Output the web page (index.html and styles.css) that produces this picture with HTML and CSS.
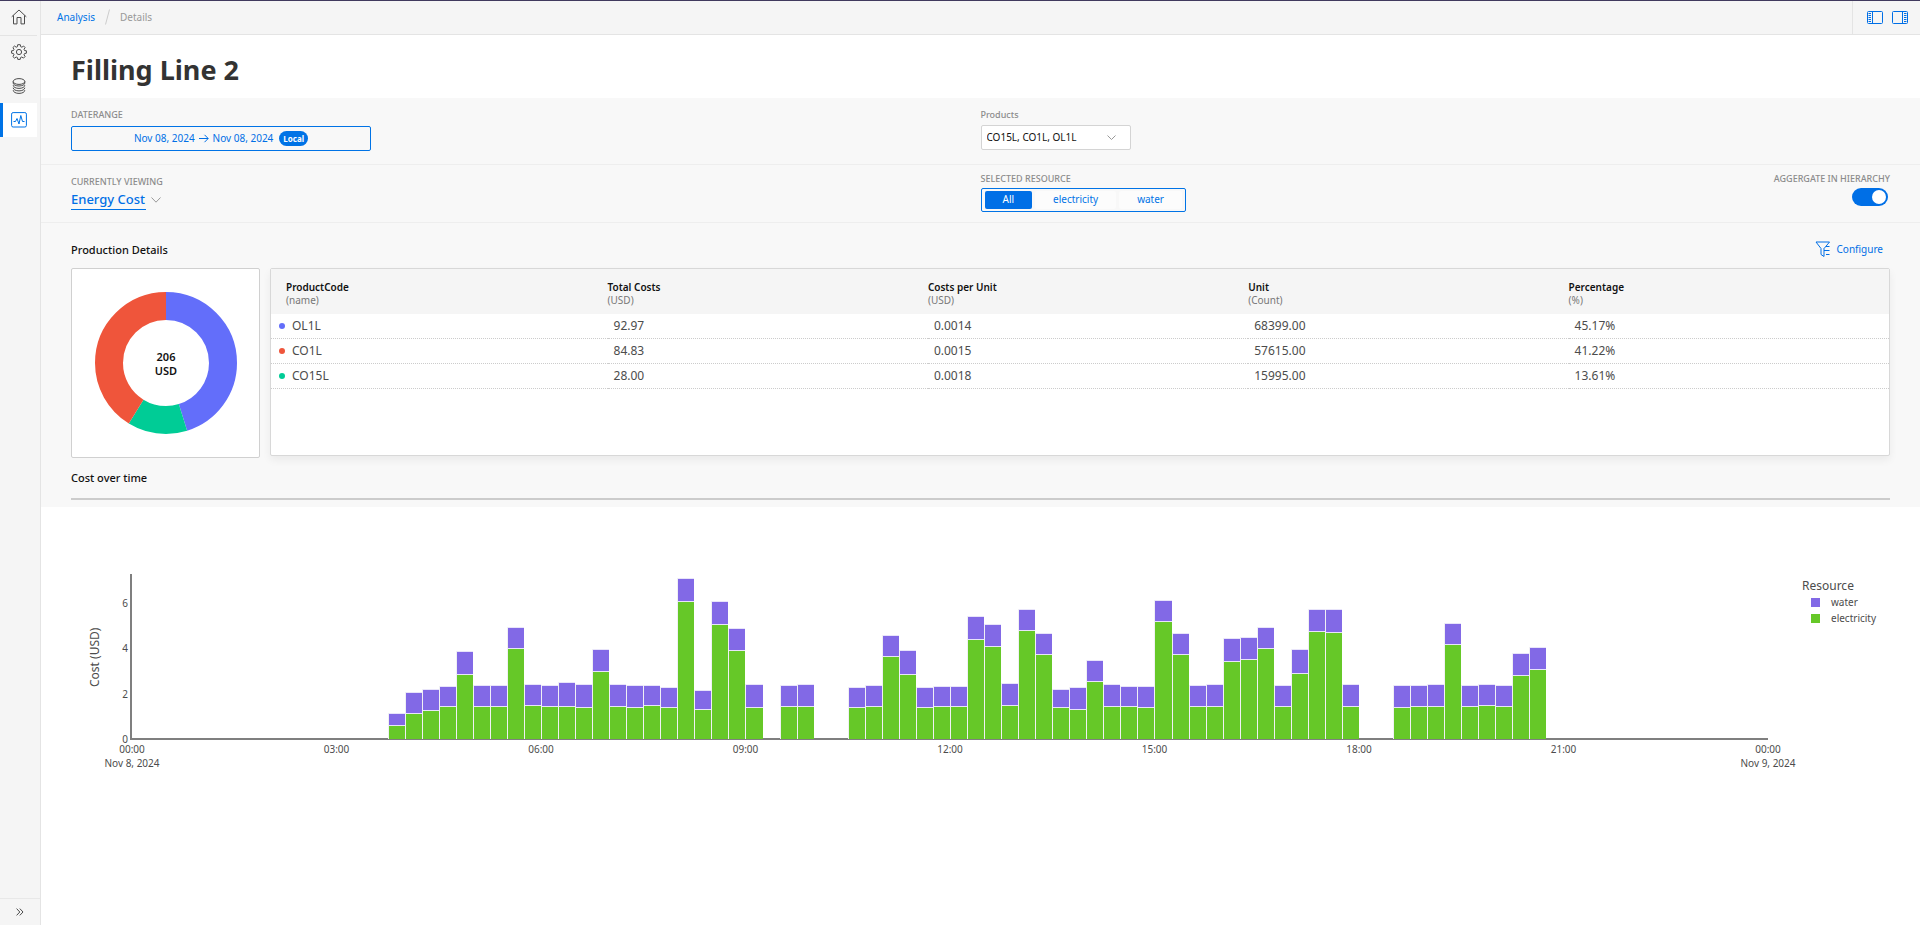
FILE: index.html
```html
<!DOCTYPE html>
<html lang="en">
<head>
    <meta charset="UTF-8">
    <meta name="viewport" content="width=device-width, initial-scale=1.0">
    <title>Filling Line 2 - Details</title>
    <link rel="stylesheet" href="styles.css">
</head>
<body>

    <!-- Sidebar -->
    <nav class="sidebar" aria-label="Main">
        <a class="nav-item nav-home" href="#" aria-label="Home">
            <svg width="16" height="16" viewBox="0 0 16 16"><path d="M.7 7.800 8 1l7.300 6.800M2.500 6.400v8.500H6V8.500h4v6.400h3.500V6.400"/></svg>
        </a>
        <a class="nav-item" href="#" aria-label="Settings">
            <svg width="16" height="16" viewBox="0 0 16 16"><circle cx="8" cy="8" r="2.600"/><path d="M6.700.7h2.600l.4 2 1.200.5L12.600 2l1.500 1.600-1.100 1.700.5 1.200 1.900.3v2.400l-1.900.4-.5 1.200 1.100 1.700-1.600 1.600-1.700-1.100-1.200.5-.4 1.900H6.800l-.4-1.900-1.200-.5-1.700 1.100-1.600-1.600L3 10.800l-.5-1.200L.6 9.200V6.800l1.900-.3L3 5.300 1.900 3.600 3.500 2l1.700 1.200 1.200-.5z"/></svg>
        </a>
        <a class="nav-item" href="#" aria-label="Data">
            <svg width="16" height="16" viewBox="0 0 16 16"><ellipse cx="8" cy="3.500" rx="5.800" ry="2.900"/><path d="M2.200 3.500v1.600c0 1.600 2.600 2.900 5.800 2.900s5.800-1.300 5.800-2.900V3.500M2.200 7.200c0 1.900 2.600 3.200 5.800 3.200s5.800-1.300 5.800-3.200M2.200 9.700c0 1.900 2.600 3.200 5.800 3.200s5.800-1.300 5.800-3.200M2.200 12.200c0 1.900 2.600 3.200 5.800 3.200s5.800-1.300 5.800-3.200"/></svg>
        </a>
        <a class="nav-item nav-active" href="#" aria-label="Analysis" aria-current="page">
            <svg width="16" height="16" viewBox="0 0 16 16"><rect x=".6" y=".6" width="14.800" height="14.400" rx="1.500"/><path d="M2.500 9.500h2l1.500-3 2 5.500 1.800-8.500 1.700 6h2"/></svg>
        </a>
        <button class="nav-expand" type="button" aria-label="Expand menu">
            <svg width="8" height="8" viewBox="0 0 8 8"><path d="m.6.600 3.200 3.400L.6 7.400M3.800.6 7 4 3.800 7.400"/></svg>
        </button>
    </nav>

    <div class="main">
        <!-- Breadcrumb bar -->
        <header class="topbar">
            <nav class="breadcrumb" aria-label="Breadcrumb">
                <a href="#">Analysis</a>
                <svg width="5" height="16" viewBox="0 0 5 16"><path d="M4.500.5.500 15.500"/></svg>
                <span>Details</span>
            </nav>
            <div class="panel-buttons">
                <button type="button" aria-label="Toggle left panel">
                    <svg width="16" height="13" viewBox="0 0 16 13"><rect x=".5" y=".5" width="15" height="12" rx="1"/><path d="M5.500.5v12M1.500 2.500H4M1.500 4.500H4M1.500 6.500H4M1.500 8.500H4M1.500 10.500H4"/></svg>
                </button>
                <button type="button" aria-label="Toggle right panel">
                    <svg width="16" height="13" viewBox="0 0 16 13"><rect x=".5" y=".5" width="15" height="12" rx="1"/><path d="M10.500.5v12M12 2.500h2.500M12 4.500h2.500M12 6.500h2.500M12 8.500h2.500M12 10.500h2.500"/></svg>
                </button>
            </div>
        </header>

        <h1 class="title">Filling Line 2</h1>

        <div class="panel">
            <!-- Filters -->
            <div class="filters filters-top">
                <div class="field">
                    <span class="label" id="range-label">DATERANGE</span>
                    <button class="daterange" type="button" aria-describedby="range-label">
                        <span>Nov 08, 2024</span>
                        <svg width="10" height="9" viewBox="0 0 10 9"><path d="M0 4.500h9M5.500.800l3.700 3.700-3.700 3.700"/></svg>
                        <span>Nov 08, 2024</span>
                        <span class="badge">Local</span>
                    </button>
                </div>
                <div class="field">
                    <label class="label" for="products">Products</label>
                    <div class="select-box">
                        <select id="products">
                            <option>CO15L, CO1L, OL1L</option>
                        </select>
                        <svg width="9" height="5" viewBox="0 0 9 5"><path d="M.5.500 4.500 4.500l4-4"/></svg>
                    </div>
                </div>
            </div>

            <div class="filters filters-bottom">
                <div class="field field-view">
                    <label class="label" for="view">CURRENTLY VIEWING</label>
                    <div class="view-box">
                        <select id="view">
                            <option>Energy Cost</option>
                        </select>
                        <svg width="10" height="6" viewBox="0 0 10 6"><path d="M.5.500 5 5.200 9.500.500"/></svg>
                    </div>
                </div>
                <div class="field-pair">
                    <fieldset class="field">
                        <legend class="label">SELECTED RESOURCE</legend>
                        <div class="segments">
                            <label><input type="radio" name="resource" checked><span>All</span></label>
                            <label><input type="radio" name="resource"><span>electricity</span></label>
                            <label><input type="radio" name="resource"><span>water</span></label>
                        </div>
                    </fieldset>
                    <div class="field field-right">
                        <label class="label" for="aggregate">AGGERGATE IN HIERARCHY</label>
                        <input class="switch" id="aggregate" type="checkbox" role="switch" checked>
                    </div>
                </div>
            </div>

            <!-- Production details -->
            <section class="details">
                <div class="section-head">
                    <h2>Production Details</h2>
                    <button class="configure" type="button">
                        <svg width="16" height="16" viewBox="0 0 16 16"><path d="M1 1h13.500L9.500 7M1 1l5 6.500v6l3 2V7M11 5.500h3.500M9 9.500h5.500M11 13.500h3.500"/></svg>
                        Configure
                    </button>
                </div>
                <div class="cards">
                    <div class="donut-card">
                        <svg class="donut" width="142" height="142" viewBox="0 0 142 142" role="img" aria-label="Cost share by product">
                            <g transform="rotate(-90 71 71)">
                                <circle cx="71" cy="71" r="57" pathLength="100" stroke="#636efa" stroke-dasharray="45.17 100"/>
                                <circle cx="71" cy="71" r="57" pathLength="100" stroke="#00cc96" stroke-dasharray="13.61 100" stroke-dashoffset="-45.17"/>
                                <circle cx="71" cy="71" r="57" pathLength="100" stroke="#ef553b" stroke-dasharray="41.22 100" stroke-dashoffset="-58.78"/>
                            </g>
                            <text x="71" y="69">206</text>
                            <text x="71" y="83">USD</text>
                        </svg>
                    </div>
                    <div class="table-card">
                        <table>
                            <thead>
                                <tr>
                                    <th>ProductCode<small>(name)</small></th>
                                    <th>Total Costs<small>(USD)</small></th>
                                    <th>Costs per Unit<small>(USD)</small></th>
                                    <th>Unit<small>(Count)</small></th>
                                    <th>Percentage<small>(%)</small></th>
                                </tr>
                            </thead>
                            <tbody>
                                <tr><td><span class="dot dot-blue"></span>OL1L</td><td>92.97</td><td>0.0014</td><td>68399.00</td><td>45.17%</td></tr>
                                <tr><td><span class="dot dot-red"></span>CO1L</td><td>84.83</td><td>0.0015</td><td>57615.00</td><td>41.22%</td></tr>
                                <tr><td><span class="dot dot-green"></span>CO15L</td><td>28.00</td><td>0.0018</td><td>15995.00</td><td>13.61%</td></tr>
                            </tbody>
                        </table>
                    </div>
                </div>
                <h2 class="chart-title">Cost over time</h2>
            </section>
        </div>

        <!-- Stacked bar chart -->
        <section class="chart">
            <div class="y-title">Cost (USD)</div>
            <div class="y-axis"><span>6</span><span>4</span><span>2</span><span>0</span></div>
            <div class="plot-col">
                <div class="plot" id="plot"></div>
                <div class="x-axis">
                    <span>00:00<br>Nov 8, 2024</span>
                    <span>03:00</span>
                    <span>06:00</span>
                    <span>09:00</span>
                    <span>12:00</span>
                    <span>15:00</span>
                    <span>18:00</span>
                    <span>21:00</span>
                    <span>00:00<br>Nov 9, 2024</span>
                </div>
            </div>
            <div class="legend">
                <div class="legend-title">Resource</div>
                <div class="legend-item"><span class="swatch water"></span>water</div>
                <div class="legend-item"><span class="swatch electricity"></span>electricity</div>
            </div>
        </section>
    </div>

    <script src="chart.js"></script>
</body>
</html>
```
FILE: styles.css
```css
* {
    box-sizing: border-box;
}

body {
    margin: 0;
    min-height: 100vh;
    display: flex;
    border-top: 1px solid #413a5e;
    background-color: white;
    color: #4c4c4c;
    font-family: "Noto Sans", sans-serif;
    font-size: 10px;
    line-height: 14px;
}

svg {
    display: block;
    fill: none;
    stroke: currentColor;
}

a {
    color: #0073e6;
    text-decoration: none;
}

button,
select {
    margin: 0;
    padding: 0;
    border: none;
    background: none;
    color: #006fe6;
    font: inherit;
    cursor: pointer;
    appearance: none;
}

h1,
h2 {
    margin: 0;
}

/* Sidebar */
.sidebar {
    display: flex;
    flex-direction: column;
    width: 41px;
    border-right: 1px solid #e4e4e4;
    background-color: #f5f5f5;
}

.nav-item {
    display: flex;
    align-items: center;
    height: 34px;
    margin-right: 3px;
    padding-left: 11px;
    color: #4c4c4c;
}

.nav-home {
    height: 35px;
    padding-bottom: 2px;
    border-bottom: 1px solid #e4e4e4;
}

.nav-home + .nav-item {
    height: 33px;
    padding-bottom: 1px;
}

.nav-active {
    padding-left: 8px;
    border-left: 3px solid #0073e6;
    background-color: white;
    color: #0073e6;
}

.nav-expand {
    display: flex;
    align-items: center;
    height: 27px;
    margin-top: auto;
    padding-left: 16px;
    border-top: 1px solid #e8e8e8;
    color: #4c4c4c;
}

/* Top bar */
.main {
    flex: 1;
    min-width: 0;
}

.topbar {
    display: flex;
    justify-content: space-between;
    height: 34px;
    border-bottom: 1px solid #e4e4e4;
    background-color: #f5f5f5;
}

.breadcrumb {
    display: flex;
    align-items: center;
    gap: 10px;
    padding: 0 0 2px 16px;
    color: #999;
}

.breadcrumb svg {
    color: #ccc;
}

.panel-buttons {
    display: flex;
    align-items: center;
    gap: 9px;
    padding: 0 12px 1px 14px;
    border-left: 1px solid #e4e4e4;
}

.title {
    padding: 17px 30px 10px;
    color: #333;
    font-size: 27px;
    line-height: 36px;
}

/* Filters */
.panel {
    background-color: #f8f8f8;
}

.filters {
    display: grid;
    grid-template-columns: 1fr 1fr;
    padding: 0 30px;
    border-bottom: 1px solid #eee;
}

.filters-top {
    padding-top: 9px;
    padding-bottom: 13px;
}

.filters-bottom {
    padding-top: 6px;
    padding-bottom: 10px;
}

.field {
    display: flex;
    flex-direction: column;
    align-items: flex-start;
    min-width: 0;
    margin: 0;
    padding: 0;
    border: none;
}

.field-view {
    padding-top: 3px;
}

.field-right {
    align-items: flex-end;
}

.field-pair {
    display: flex;
    justify-content: space-between;
}

.label {
    padding: 2px 0 0;
    color: #8c8c8c;
    font-size: 9px;
    font-weight: 500;
    line-height: 12px;
}

.daterange {
    display: flex;
    align-items: center;
    justify-content: center;
    gap: 4px;
    width: 300px;
    height: 25px;
    margin-top: 5px;
    padding-bottom: 1px;
    border: 1px solid #0073e6;
    border-radius: 2px;
}

.badge {
    margin-left: 2px;
    padding: 0 4px;
    border-radius: 8px;
    background-color: #0073e6;
    color: white;
    font-size: 8px;
    font-weight: bold;
    line-height: 15px;
}

.select-box {
    display: grid;
    align-items: center;
    width: 150px;
    height: 25px;
    margin-top: 4px;
    border: 1px solid #d4d4d4;
    border-radius: 2px;
    background-color: white;
}

.select-box select,
.select-box svg {
    grid-area: 1 / 1;
}

.select-box select {
    height: 23px;
    padding: 0 0 2px 5px;
    color: #111;
}

.select-box svg {
    justify-self: end;
    margin-right: 14px;
    color: #999;
    pointer-events: none;
}

.view-box {
    display: flex;
    align-items: center;
    gap: 5px;
    margin-top: 1px;
    color: #999;
}

.view-box select {
    height: 21px;
    border-bottom: 1px solid #0073e6;
    font-size: 13px;
    font-weight: 500;
    line-height: 20px;
}

.segments {
    display: flex;
    gap: 3px;
    height: 24px;
    margin-top: 3px;
    padding: 2px 3px;
    border: 1px solid #0073e6;
    border-radius: 2px;
}

.segments label {
    display: flex;
    cursor: pointer;
}

.segments input {
    position: absolute;
    opacity: 0;
}

.segments span {
    padding: 0 18px;
    border-radius: 2px;
    background-color: #fcfcfc;
    color: #0073e6;
    line-height: 17px;
}

.segments input:checked + span {
    background-color: #006fe6;
    color: white;
}

.switch {
    width: 36px;
    height: 18px;
    margin: 3px 2px 0 0;
    padding: 2px;
    border-radius: 9px;
    background-color: #999;
    appearance: none;
}

.switch::before {
    content: "";
    display: block;
    width: 14px;
    height: 14px;
    border-radius: 50%;
    background-color: white;
}

.switch:checked {
    background-color: #006fe6;
}

.switch:checked::before {
    margin-left: auto;
}

/* Production details */
.details {
    padding: 18px 30px 7px;
}

.section-head {
    display: flex;
    justify-content: space-between;
    height: 27px;
}

.section-head h2,
.chart-title {
    color: #111;
    font-size: 11px;
    font-weight: 500;
    line-height: 18px;
}

.configure {
    display: flex;
    align-items: center;
    gap: 6px;
    height: 15px;
    margin-right: 7px;
}

.cards {
    display: flex;
    align-items: flex-start;
    gap: 10px;
}

.donut-card {
    display: flex;
    align-items: center;
    justify-content: center;
    width: 189px;
    height: 190px;
    border: 1px solid #d0d0d0;
    border-radius: 2px;
    background-color: white;
}

.donut circle {
    stroke-width: 28;
}

.donut text {
    fill: #111;
    stroke: none;
    font-size: 11px;
    font-weight: 600;
    text-anchor: middle;
}

.table-card {
    flex: 1;
    height: 188px;
    border: 1px solid #d8d8d8;
    border-radius: 2px;
    background-color: white;
    box-shadow: 0 4px 8px rgba(0, 0, 0, 0.06);
}

table {
    width: 100%;
    border-spacing: 0;
    table-layout: fixed;
}

th {
    height: 45px;
    padding: 5px 0 0;
    background-color: #f5f5f5;
    color: #111;
    font-weight: 600;
    line-height: 13px;
    text-align: left;
}

th:first-child {
    width: 20.8%;
    padding-left: 15px;
}

th small {
    display: block;
    color: #777;
    font-size: 10px;
    font-weight: normal;
}

td {
    height: 25px;
    padding: 0 0 0 6px;
    border-bottom: 1px dotted #ccc;
    font-size: 12px;
}

td:first-child {
    padding-left: 8px;
}

.dot {
    display: inline-block;
    width: 6px;
    height: 6px;
    margin-right: 7px;
    border-radius: 50%;
    vertical-align: 1px;
}

.dot-blue {
    background-color: #636efa;
}

.dot-red {
    background-color: #ef553b;
}

.dot-green {
    background-color: #00cc96;
}

.chart-title {
    padding: 11px 0;
    border-bottom: 2px solid #ccc;
}

/* Chart */
.chart {
    display: flex;
    padding: 67px 30px 0 46px;
}

.y-title {
    height: 167px;
    font-size: 12px;
    line-height: 16px;
    text-align: center;
    writing-mode: vertical-rl;
    transform: rotate(180deg);
}

.y-axis {
    display: flex;
    flex-direction: column;
    justify-content: space-between;
    width: 25px;
    height: 150px;
    margin-top: 22px;
    text-align: right;
}

.plot-col {
    flex: 1;
    margin-left: 2px;
}

.plot {
    display: grid;
    grid-template-columns: repeat(96, 1fr);
    align-items: end;
    height: 166px;
    border-left: 2px solid #7f7f7f;
    border-bottom: 2px solid #7f7f7f;
}

/* Bars stand on the lower half of the axis line */
.bar {
    display: flex;
    flex-direction: column;
    margin-bottom: -1px;
    border-left: 1px solid #f0f0f4;
}

.bar div {
    border-top: 1px solid #e8e4fa;
}

.water {
    background-color: #8269e6;
}

.electricity {
    background-color: #66c828;
}

.x-axis {
    display: flex;
    justify-content: space-between;
    margin-top: 2px;
    padding-left: 2px;
    text-align: center;
}

/* Every tick takes no width so that it is centred on its hour */
.x-axis span {
    display: flex;
    justify-content: center;
    width: 0;
    white-space: nowrap;
}

.legend {
    width: 88px;
    margin: 4px 0 0 34px;
}

.legend-title {
    font-size: 12px;
    line-height: 16px;
}

.legend-item {
    display: flex;
    align-items: center;
    gap: 11px;
    height: 16px;
    padding-left: 9px;
}

.swatch {
    width: 9px;
    height: 9px;
}
```
FILE: chart.js
```js
// Axis height in the units of the data
const AXIS_HEIGHT = 163;

// First quarter hour of each run, then [electricity, total] for each bar
const runs = [
    [15, [[13, 25], [25, 46], [28, 49], [32, 52], [64, 86], [32, 53], [32, 53], [90, 110], [33, 54],
          [32, 53], [32, 56], [31, 54], [67, 88], [32, 54], [31, 53], [33, 53], [31, 51], [137, 159],
          [29, 48], [114, 136], [88, 109], [31, 54]]],
    [38, [[32, 53], [32, 54]]],
    [42, [[31, 51], [32, 53], [82, 102], [64, 87], [31, 51], [32, 52], [32, 52], [99, 121], [92, 113],
          [33, 55], [108, 128], [84, 104], [31, 49], [29, 51], [57, 78], [32, 54], [32, 52], [31, 52],
          [117, 137], [84, 104], [32, 53], [32, 54], [77, 99], [79, 100], [90, 110], [32, 53],
          [65, 88], [107, 128], [106, 128], [32, 54]]],
    [74, [[31, 53], [32, 53], [32, 54], [94, 114], [32, 53], [33, 54], [32, 53], [63, 84], [69, 90]]]
];

const plot = document.getElementById("plot");

function addPart(bar, name, value) {
    const part = document.createElement("div");
    part.className = name;
    part.style.flex = value + " 0 0";
    bar.appendChild(part);
}

runs.forEach(function([start, bars]) {
    bars.forEach(function([electricity, total], i) {
        const bar = document.createElement("div");
        bar.className = "bar";
        bar.style.gridColumn = start + i + 1;
        bar.style.gridRow = 1;
        bar.style.height = ((total + 1) / AXIS_HEIGHT * 100) + "%";
        addPart(bar, "water", total - electricity);
        addPart(bar, "electricity", electricity);
        plot.appendChild(bar);
    });
});
```
